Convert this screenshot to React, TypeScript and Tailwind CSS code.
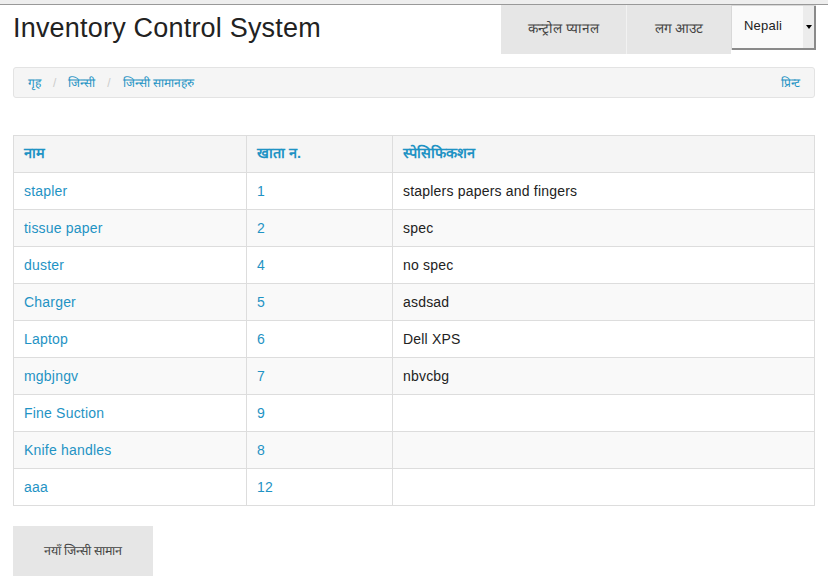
import React from "react";

interface Item {
  name: string;
  account: string;
  spec: string;
}

const ITEMS: Item[] = [
  { name: "stapler", account: "1", spec: "staplers papers and fingers" },
  { name: "tissue paper", account: "2", spec: "spec" },
  { name: "duster", account: "4", spec: "no spec" },
  { name: "Charger", account: "5", spec: "asdsad" },
  { name: "Laptop", account: "6", spec: "Dell XPS" },
  { name: "mgbjngv", account: "7", spec: "nbvcbg" },
  { name: "Fine Suction", account: "9", spec: "" },
  { name: "Knife handles", account: "8", spec: "" },
  { name: "aaa", account: "12", spec: "" },
];

export default function App() {
  return (
    <div className="min-h-[582px] w-[828px] bg-white font-['Liberation_Sans',sans-serif] text-[14px] tracking-[0.2px] text-[#222]">
      {/* top strip */}
      <div className="h-[4px] bg-[#eeeeee]" />
      <div className="h-px bg-[#999999]" />

      <div className="flex items-start justify-between pl-[13px] pr-[12px]">
        <h1 className="pt-[7px] text-[27px] font-normal leading-[32px] tracking-[0.2px] text-[#222]">
          Inventory Control System
        </h1>

        <div className="flex items-start tracking-normal">
          <a className="flex h-[49px] w-[125px] items-center justify-center bg-[#e6e6e6] text-[13.5px] text-[#444]">
            कन्ट्रोल प्यानल
          </a>
          <div className="h-[49px] w-px bg-[#f2f2f2]" />
          <a className="flex h-[49px] w-[104px] items-center justify-center bg-[#e6e6e6] text-[13.5px] text-[#444]">
            लग आउट
          </a>
          <div className="flex h-[45px] w-[85px] border-t border-l border-[#d8d8d8] bg-[#fafafa] shadow-[inset_-2px_-2px_0_#8a8a8a]">
            <span className="flex-1 pl-[12px] pt-[10px] text-[13px] tracking-[0.2px] text-[#222]">Nepali</span>
            <span className="mb-[2px] mr-[2px] flex w-[11px] items-center justify-center bg-[#ececec]">
              <span className="h-0 w-0 border-x-[3px] border-t-[4px] border-x-transparent border-t-black" />
            </span>
          </div>
        </div>
      </div>

      <div className="px-[13px]">
        {/* breadcrumb */}
        <div className="mt-[13px] flex h-[31px] items-center justify-between rounded-[3px] border border-[#e3e3e3] bg-[#f5f5f5] pl-[14px] pr-[14px] text-[12px] tracking-normal text-[#1f93c4]">
          <div className="flex items-center">
            <a>गृह</a>
            <span className="px-[12px] text-[#cccccc]">/</span>
            <a>जिन्सी</a>
            <span className="px-[12px] text-[#cccccc]">/</span>
            <a>जिन्सी सामानहरु</a>
          </div>
          <a>प्रिन्ट</a>
        </div>

        {/* table */}
        <table className="mt-[37px] w-full border-collapse border border-[#dddddd]">
          <thead>
            <tr className="h-[37px] bg-[#f5f5f5] text-[14.5px] tracking-normal">
              <th className="w-[233px] border border-[#dddddd] px-[10px] text-left font-semibold text-[#1f93c4]">नाम</th>
              <th className="w-[146px] border border-[#dddddd] px-[10px] text-left font-semibold text-[#1f93c4]">खाता न.</th>
              <th className="border border-[#dddddd] px-[10px] text-left font-semibold text-[#1f93c4]">स्पेसिफिकशन</th>
            </tr>
          </thead>
          <tbody>
            {ITEMS.map((item, i) => (
              <tr key={item.name} className={i % 2 === 1 ? "h-[37px] bg-[#f9f9f9]" : "h-[37px] bg-white"}>
                <td className="border border-[#dddddd] px-[10px] text-[#1f93c4]">{item.name}</td>
                <td className="border border-[#dddddd] px-[10px] text-[#1f93c4]">{item.account}</td>
                <td className="border border-[#dddddd] px-[10px] text-[#222]">{item.spec}</td>
              </tr>
            ))}
          </tbody>
        </table>

        <button className="mt-[20px] flex h-[50px] w-[140px] items-center justify-center bg-[#e6e6e6] text-[12.5px] tracking-normal text-[#444]">
          नयाँ जिन्सी सामान
        </button>
      </div>
    </div>
  );
}
